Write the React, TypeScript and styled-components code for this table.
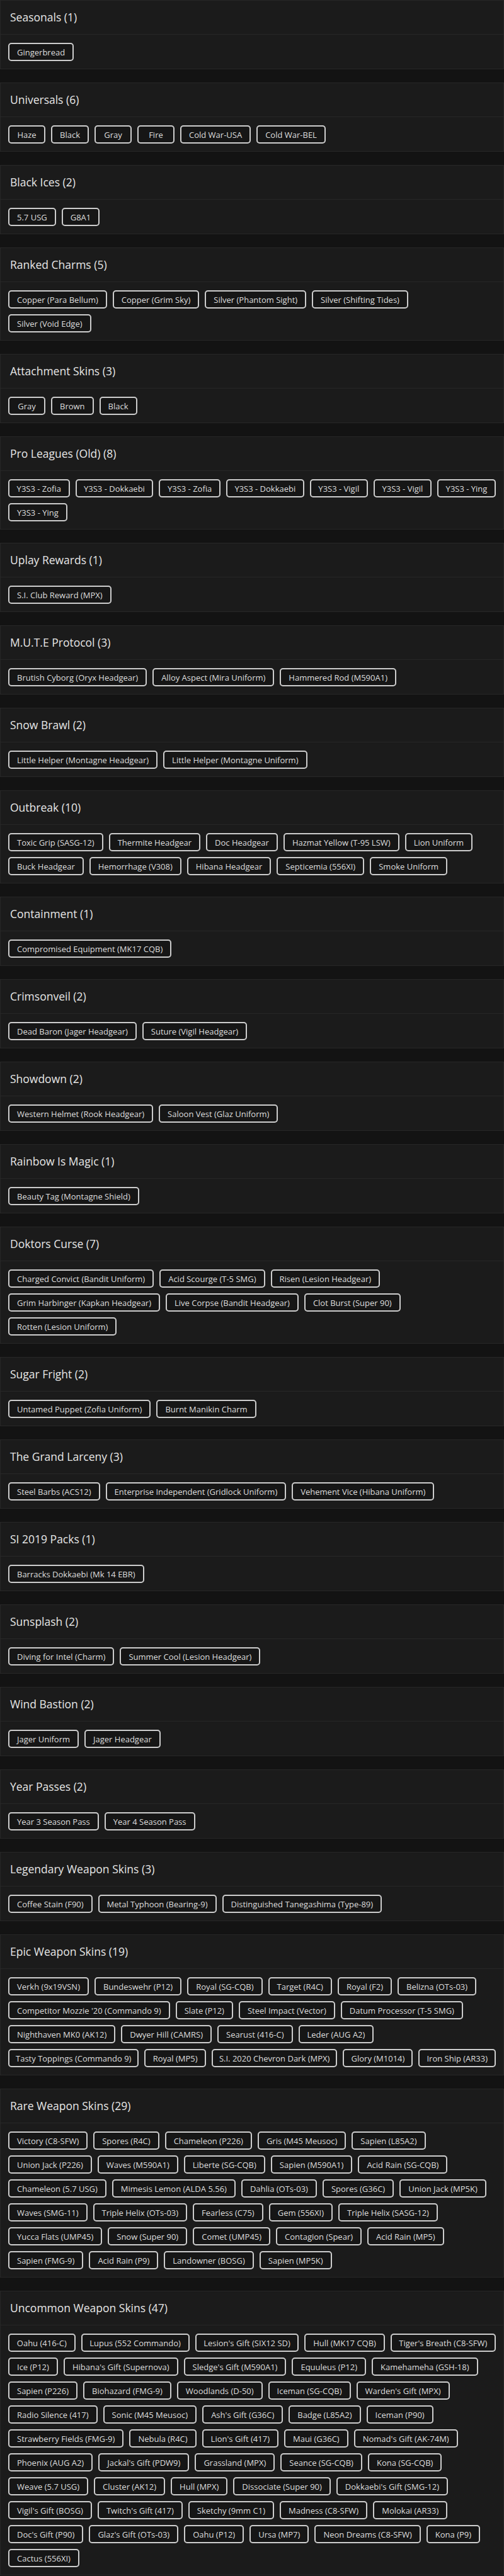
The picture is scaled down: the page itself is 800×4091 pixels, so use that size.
import React from "react";
import styled, { createGlobalStyle } from "styled-components";

const GlobalStyle = createGlobalStyle`
  html, body {
    margin: 0;
    padding: 0;
    background: #131313;
  }
  body {
    font-family: "Open Sans", "Noto Sans", Arial, sans-serif;
    color: #e2e2e2;
  }
`;

const Page = styled.div`
  display: flex;
  flex-direction: column;
  gap: 21px;
`;

const Card = styled.section`
  background: #1b1b1b;
  border: 1px solid #272727;
`;

const CardHeader = styled.h5`
  margin: 0;
  padding: 14px 15px;
  line-height: 25px;
  font-size: 17.5px;
  font-weight: 500;
  color: #e6e6e6;
  border-bottom: 1px solid #272727;
`;

const CardBody = styled.div`
  display: flex;
  flex-direction: column;
  gap: 9px;
  padding: 13px 12px 12px;
`;

const ChipRow = styled.div`
  display: flex;
  gap: 9px;
`;

const Chip = styled.span`
  box-sizing: border-box;
  display: inline-flex;
  align-items: center;
  justify-content: center;
  height: 29px;
  min-width: 59px;
  padding: 0 12px;
  border: 2px solid #cdcdcd;
  border-radius: 5px;
  background: #161616;
  color: #dedede;
  font-size: 13px;
  white-space: nowrap;
`;

type Section = { title: string; rows: string[][] };

const sections: Section[] = [
  { title: "Seasonals", rows: [["Gingerbread"]] },
  {
    title: "Universals",
    rows: [["Haze", "Black", "Gray", "Fire", "Cold War-USA", "Cold War-BEL"]],
  },
  { title: "Black Ices", rows: [["5.7 USG", "G8A1"]] },
  {
    title: "Ranked Charms",
    rows: [
      ["Copper (Para Bellum)", "Copper (Grim Sky)", "Silver (Phantom Sight)", "Silver (Shifting Tides)"],
      ["Silver (Void Edge)"],
    ],
  },
  { title: "Attachment Skins", rows: [["Gray", "Brown", "Black"]] },
  {
    title: "Pro Leagues (Old)",
    rows: [
      ["Y3S3 - Zofia", "Y3S3 - Dokkaebi", "Y3S3 - Zofia", "Y3S3 - Dokkaebi", "Y3S3 - Vigil", "Y3S3 - Vigil", "Y3S3 - Ying"],
      ["Y3S3 - Ying"],
    ],
  },
  { title: "Uplay Rewards", rows: [["S.I. Club Reward (MPX)"]] },
  {
    title: "M.U.T.E Protocol",
    rows: [["Brutish Cyborg (Oryx Headgear)", "Alloy Aspect (Mira Uniform)", "Hammered Rod (M590A1)"]],
  },
  {
    title: "Snow Brawl",
    rows: [["Little Helper (Montagne Headgear)", "Little Helper (Montagne Uniform)"]],
  },
  {
    title: "Outbreak",
    rows: [
      ["Toxic Grip (SASG-12)", "Thermite Headgear", "Doc Headgear", "Hazmat Yellow (T-95 LSW)", "Lion Uniform"],
      ["Buck Headgear", "Hemorrhage (V308)", "Hibana Headgear", "Septicemia (556XI)", "Smoke Uniform"],
    ],
  },
  { title: "Containment", rows: [["Compromised Equipment (MK17 CQB)"]] },
  { title: "Crimsonveil", rows: [["Dead Baron (Jager Headgear)", "Suture (Vigil Headgear)"]] },
  { title: "Showdown", rows: [["Western Helmet (Rook Headgear)", "Saloon Vest (Glaz Uniform)"]] },
  { title: "Rainbow Is Magic", rows: [["Beauty Tag (Montagne Shield)"]] },
  {
    title: "Doktors Curse",
    rows: [
      ["Charged Convict (Bandit Uniform)", "Acid Scourge (T-5 SMG)", "Risen (Lesion Headgear)"],
      ["Grim Harbinger (Kapkan Headgear)", "Live Corpse (Bandit Headgear)", "Clot Burst (Super 90)"],
      ["Rotten (Lesion Uniform)"],
    ],
  },
  { title: "Sugar Fright", rows: [["Untamed Puppet (Zofia Uniform)", "Burnt Manikin Charm"]] },
  {
    title: "The Grand Larceny",
    rows: [["Steel Barbs (ACS12)", "Enterprise Independent (Gridlock Uniform)", "Vehement Vice (Hibana Uniform)"]],
  },
  { title: "SI 2019 Packs", rows: [["Barracks Dokkaebi (Mk 14 EBR)"]] },
  { title: "Sunsplash", rows: [["Diving for Intel (Charm)", "Summer Cool (Lesion Headgear)"]] },
  { title: "Wind Bastion", rows: [["Jager Uniform", "Jager Headgear"]] },
  { title: "Year Passes", rows: [["Year 3 Season Pass", "Year 4 Season Pass"]] },
  {
    title: "Legendary Weapon Skins",
    rows: [["Coffee Stain (F90)", "Metal Typhoon (Bearing-9)", "Distinguished Tanegashima (Type-89)"]],
  },
  {
    title: "Epic Weapon Skins",
    rows: [
      ["Verkh (9x19VSN)", "Bundeswehr (P12)", "Royal (SG-CQB)", "Target (R4C)", "Royal (F2)", "Belizna (OTs-03)"],
      ["Competitor Mozzie '20 (Commando 9)", "Slate (P12)", "Steel Impact (Vector)", "Datum Processor (T-5 SMG)"],
      ["Nighthaven MK0 (AK12)", "Dwyer Hill (CAMRS)", "Searust (416-C)", "Leder (AUG A2)"],
      ["Tasty Toppings (Commando 9)", "Royal (MP5)", "S.I. 2020 Chevron Dark (MPX)", "Glory (M1014)", "Iron Ship (AR33)"],
    ],
  },
  {
    title: "Rare Weapon Skins",
    rows: [
      ["Victory (C8-SFW)", "Spores (R4C)", "Chameleon (P226)", "Gris (M45 Meusoc)", "Sapien (L85A2)"],
      ["Union Jack (P226)", "Waves (M590A1)", "Liberte (SG-CQB)", "Sapien (M590A1)", "Acid Rain (SG-CQB)"],
      ["Chameleon (5.7 USG)", "Mimesis Lemon (ALDA 5.56)", "Dahlia (OTs-03)", "Spores (G36C)", "Union Jack (MP5K)"],
      ["Waves (SMG-11)", "Triple Helix (OTs-03)", "Fearless (C75)", "Gem (556XI)", "Triple Helix (SASG-12)"],
      ["Yucca Flats (UMP45)", "Snow (Super 90)", "Comet (UMP45)", "Contagion (Spear)", "Acid Rain (MP5)"],
      ["Sapien (FMG-9)", "Acid Rain (P9)", "Landowner (BOSG)", "Sapien (MP5K)"],
    ],
  },
  {
    title: "Uncommon Weapon Skins",
    rows: [
      ["Oahu (416-C)", "Lupus (552 Commando)", "Lesion's Gift (SIX12 SD)", "Hull (MK17 CQB)", "Tiger's Breath (C8-SFW)"],
      ["Ice (P12)", "Hibana's Gift (Supernova)", "Sledge's Gift (M590A1)", "Equuleus (P12)", "Kamehameha (GSH-18)"],
      ["Sapien (P226)", "Biohazard (FMG-9)", "Woodlands (D-50)", "Iceman (SG-CQB)", "Warden's Gift (MPX)"],
      ["Radio Silence (417)", "Sonic (M45 Meusoc)", "Ash's Gift (G36C)", "Badge (L85A2)", "Iceman (P90)"],
      ["Strawberry Fields (FMG-9)", "Nebula (R4C)", "Lion's Gift (417)", "Maui (G36C)", "Nomad's Gift (AK-74M)"],
      ["Phoenix (AUG A2)", "Jackal's Gift (PDW9)", "Grassland (MPX)", "Seance (SG-CQB)", "Kona (SG-CQB)"],
      ["Weave (5.7 USG)", "Cluster (AK12)", "Hull (MPX)", "Dissociate (Super 90)", "Dokkaebi's Gift (SMG-12)"],
      ["Vigil's Gift (BOSG)", "Twitch's Gift (417)", "Sketchy (9mm C1)", "Madness (C8-SFW)", "Molokai (AR33)"],
      ["Doc's Gift (P90)", "Glaz's Gift (OTs-03)", "Oahu (P12)", "Ursa (MP7)", "Neon Dreams (C8-SFW)", "Kona (P9)"],
      ["Cactus (556XI)"],
    ],
  },
];

const SectionCard = ({ section }: { section: Section }) => {
  const count = section.rows.reduce((n, row) => n + row.length, 0);
  return (
    <Card>
      <CardHeader>
        {section.title} ({count})
      </CardHeader>
      <CardBody>
        {section.rows.map((row, i) => (
          <ChipRow key={i}>
            {row.map((item, j) => (
              <Chip key={j}>{item}</Chip>
            ))}
          </ChipRow>
        ))}
      </CardBody>
    </Card>
  );
};

const App = () => {
  return (
    <>
      <GlobalStyle />
      <Page>
        {sections.map((s) => (
          <SectionCard key={s.title} section={s} />
        ))}
      </Page>
    </>
  );
};

export default App;
